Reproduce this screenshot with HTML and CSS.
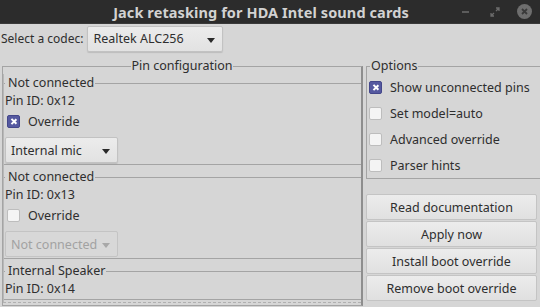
FILE: index.html
```html
<!DOCTYPE html>
<html>
<head>
    <title>Jack retasking for HDA Intel sound cards</title>
    <link rel="stylesheet" href="styles.css">
</head>
<body>
    <div class="titlebar">
        <span class="title">Jack retasking for HDA Intel sound cards</span>
        <div class="wm-buttons">
            <span class="wm-min"></span>
            <svg class="wm-max" width="10" height="10" viewBox="0 0 10 10"><path d="M1 9 L4 6 M6 1 H9 V4 M9 1 L6 4 M1 6 V9 H4" stroke="#6b6b6b" stroke-width="1.3" fill="none"/></svg>
            <svg class="wm-close" width="17" height="17" viewBox="0 0 17 17"><circle cx="8.5" cy="8.5" r="7.5" fill="#6e6e6e"/><path d="M6 6 L11 11 M11 6 L6 11" stroke="#3a3a3a" stroke-width="1.8"/></svg>
        </div>
    </div>

    <div class="window">
        <div class="codec-row">
            <label>Select a codec:</label>
            <div class="combo codec-combo">Realtek ALC256<span class="arrow"></span></div>
        </div>

        <div class="main">
            <fieldset class="frame pins">
                <legend class="centered">Pin configuration</legend>
                <div class="scroll">
                    <fieldset class="frame pin">
                        <legend>Not connected</legend>
                        <div class="pin-id">Pin ID: 0x12</div>
                        <div class="check"><span class="box checked"></span>Override</div>
                        <div class="combo pin-combo">Internal mic<span class="arrow"></span></div>
                    </fieldset>
                    <fieldset class="frame pin">
                        <legend>Not connected</legend>
                        <div class="pin-id">Pin ID: 0x13</div>
                        <div class="check"><span class="box"></span>Override</div>
                        <div class="combo pin-combo disabled">Not connected<span class="arrow"></span></div>
                    </fieldset>
                    <fieldset class="frame pin">
                        <legend>Internal Speaker</legend>
                        <div class="pin-id">Pin ID: 0x14</div>
                    </fieldset>
                </div>
            </fieldset>

            <div class="side">
                <fieldset class="frame options">
                    <legend>Options</legend>
                    <div class="check"><span class="box checked"></span>Show unconnected pins</div>
                    <div class="check"><span class="box"></span>Set model=auto</div>
                    <div class="check"><span class="box"></span>Advanced override</div>
                    <div class="check"><span class="box"></span>Parser hints</div>
                </fieldset>
                <div class="buttons">
                    <button>Read documentation</button>
                    <button>Apply now</button>
                    <button>Install boot override</button>
                    <button>Remove boot override</button>
                </div>
            </div>
        </div>
    </div>
</body>
</html>
```

FILE: styles.css
```css
* { margin: 0; padding: 0; box-sizing: border-box; }
html, body { width: 540px; height: 307px; overflow: hidden; }
body { font-family: 'Noto Sans', 'Open Sans', sans-serif; font-size: 12.5px; color: #2e2e2e; background: #d6d6d6; }

.titlebar { height: 24px; background: #2c2c2c; position: relative; display: flex; align-items: center; justify-content: center; padding-right: 18px; border-bottom: 1px solid #3a3a3a; }
.title { color: #d2d2d2; font-weight: bold; font-size: 14.5px; letter-spacing: 0.1px; }
.wm-buttons { position: absolute; right: 7px; top: 3px; display: flex; align-items: center; }
.wm-min { width: 7px; height: 2px; background: #5c5c5c; margin-right: 21px; }
.wm-max { margin-right: 16px; }

.window { padding-top: 1px; }
.codec-row { display: flex; align-items: center; height: 27px; }
.codec-row label { font-size: 12px; margin-right: 4px; padding-left: 1px; }

.combo { position: relative; height: 26px; display: flex; align-items: center; padding-left: 5px; border: 1px solid #c2c2c2; border-radius: 2px; background: linear-gradient(#ececec, #e2e2e2); box-shadow: 0 1px 1px rgba(0,0,0,0.12); }
.combo .arrow { position: absolute; right: 7px; top: 11px; width: 0; height: 0; border-left: 4px solid transparent; border-right: 4px solid transparent; border-top: 5px solid #2a2a2a; }
.codec-combo { width: 136px; }
.pin-combo { width: 113px; margin-top: 4px; }
.combo.disabled { color: #a2a2a2; background: #d8d8d8; border-color: #c4c4c4; box-shadow: none; }
.combo.disabled .arrow { border-top-color: #a8a8a8; }

.main { display: flex; margin-top: 6px; padding-left: 2px; }

.frame { border: 1px solid #a4a4a4; }
.frame legend { line-height: 16px; padding: 0 1px; margin-left: 3px; }
.frame legend.centered { margin: 0 auto; }

.pins { width: 361px; height: 248px; border-right: 2px solid #8e8e8e; padding-bottom: 2px; }
.scroll { height: 229px; overflow: hidden; border-left: 1px solid #b8b8b8; padding-top: 1px; border-bottom: 1px dashed #b0b0b0; }
.pin { border-left: 0; border-right: 0; border-bottom: 1px solid #a4a4a4; padding: 1px 0 1px 1px; margin-bottom: 4px; }
.pin legend { margin-left: 0; padding-left: 3px; }
.pin-id { height: 19px; line-height: 19px; margin-top: -1px; }
.pin .check { height: 23px; padding-left: 2px; }

.check { display: flex; align-items: center; height: 26px; }
.box { width: 13px; height: 13px; border: 1px solid #bdbdbd; border-radius: 2px; background: #f4f4f4; margin-right: 8px; position: relative; }
.box.checked { background: #5559a0; border-color: #44478a; }
.box.checked::before, .box.checked::after { content: ''; position: absolute; left: 5px; top: 2px; width: 1.5px; height: 7px; background: #fff; }
.box.checked::before { transform: rotate(45deg); }
.box.checked::after { transform: rotate(-45deg); }

.side { flex: 1; padding-left: 3px; }
.options { padding: 0 0 0 2px; border-right: none; }
.options legend { margin-left: 1px; }

.buttons { display: flex; flex-direction: column; gap: 1px; margin-top: 15px; padding-right: 3px; }
button { height: 26px; font-family: inherit; font-size: 12.5px; color: #2e2e2e; border: 1px solid #c4c4c4; border-radius: 2px; background: linear-gradient(#ececec, #e0e0e0); }
```
